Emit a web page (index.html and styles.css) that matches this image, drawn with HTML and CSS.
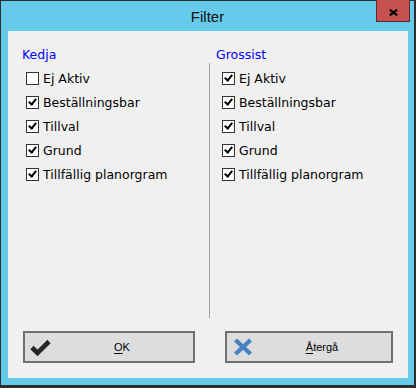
FILE: index.html
```html
<!DOCTYPE html>
<html lang="sv">
<head>
<meta charset="utf-8">
<title>Filter</title>
<link rel="stylesheet" href="styles.css">
</head>
<body>
<div class="window">
  <div class="titlebar">
    <span class="spacer"></span>
    <span class="title">Filter</span>
    <button class="close" aria-label="Stäng">
      <svg width="9" height="7" viewBox="0 0 9 7"><path d="M0.8 0.6 L8.2 6.4 M8.2 0.6 L0.8 6.4" stroke="#000" stroke-width="2.1" fill="none"/></svg>
    </button>
  </div>
  <div class="client">
    <div class="groups">
      <section class="group group-left">
        <div class="group-label">Kedja</div>
        <ul class="opts">
          <li><span class="cb"></span>Ej Aktiv</li>
          <li><span class="cb checked"></span>Beställningsbar</li>
          <li><span class="cb checked"></span>Tillval</li>
          <li><span class="cb checked"></span>Grund</li>
          <li><span class="cb checked"></span>Tillfällig planorgram</li>
        </ul>
      </section>
      <section class="group group-right">
        <div class="group-label">Grossist</div>
        <ul class="opts">
          <li><span class="cb checked"></span>Ej Aktiv</li>
          <li><span class="cb checked"></span>Beställningsbar</li>
          <li><span class="cb checked"></span>Tillval</li>
          <li><span class="cb checked"></span>Grund</li>
          <li><span class="cb checked"></span>Tillfällig planorgram</li>
        </ul>
      </section>
    </div>
    <div class="actions">
      <button class="btn btn-ok">
        <svg class="icon icon-ok" width="21" height="17" viewBox="0 0 21 17"><path d="M2 8.5 L7.5 14 L19 2.5" stroke="#262626" stroke-width="4.6" fill="none" stroke-linejoin="miter"/></svg>
        <span class="btn-label"><u>O</u>K</span>
      </button>
      <button class="btn btn-cancel">
        <svg class="icon icon-cancel" width="20" height="18" viewBox="0 0 20 18"><path d="M2.5 2 L17.5 16 M17.5 2 L2.5 16" stroke="#4a80bf" stroke-width="4.4" fill="none"/></svg>
        <span class="btn-label"><u>Å</u>tergå</span>
      </button>
    </div>
  </div>
</div>
</body>
</html>
```
FILE: styles.css
```css
html, body {
  margin: 0;
  padding: 0;
}

body {
  background: #ffffff;
}

.window {
  width: 416px;
  height: 388px;
  box-sizing: border-box;
  border-style: solid;
  border-color: #2e2e2e;
  border-width: 1px 2px 3px 1px;
  background: #66cbea;
  display: flex;
  flex-direction: column;
}

.titlebar {
  height: 30px;
  display: grid;
  grid-template-columns: 1fr auto 1fr;
}

.title {
  font-family: "Liberation Sans", Arial, sans-serif;
  font-size: 15px;
  line-height: 28px;
  padding-top: 2px;
  color: #111;
}

.close {
  justify-self: end;
  align-self: start;
  width: 34px;
  height: 22px;
  margin: -1px 4px 0 0;
  padding: 2px 0 0 0;
  box-sizing: border-box;
  border: 1px solid #5e2a2a;
  border-top-color: #c75050;
  background: #c75050;
  display: flex;
  align-items: center;
  justify-content: center;
}

.client {
  flex: 1;
  margin: 0 6px 7px 7px;
  background: #f0f0f0;
  padding-top: 16px;
  display: flex;
  flex-direction: column;
  font-family: "DejaVu Sans", Verdana, sans-serif;
  font-size: 12.5px;
  color: #000;
}

.groups {
  display: grid;
  grid-template-columns: 201px 1fr;
}

.group-label {
  line-height: 15px;
  color: #0000ff;
}

.group-left .group-label {
  padding-left: 14px;
}

.group-right .group-label {
  padding-left: 7px;
}

.opts {
  list-style: none;
  margin: 1px 0 0 0;
  height: 255px;
  box-sizing: border-box;
  padding-top: 3px;
}

.group-left .opts {
  padding-left: 18px;
}

.group-right .opts {
  padding-left: 12px;
  border-left: 1px solid #a0a0a0;
}

.opts li {
  height: 24px;
  display: flex;
  align-items: center;
  gap: 4px;
  line-height: 15px;
}

.cb {
  width: 13px;
  height: 13px;
  box-sizing: border-box;
  border: 1px solid #333333;
  background: #ffffff;
  flex: none;
  position: relative;
}

.cb.checked::after {
  content: "";
  position: absolute;
  left: 3px;
  top: 0px;
  width: 3px;
  height: 6px;
  border-right: 2.5px solid #000;
  border-bottom: 2.5px solid #000;
  transform: rotate(40deg);
  transform-origin: center;
}

.actions {
  margin-top: 13px;
  padding: 0 15px;
  display: flex;
  gap: 30px;
}

.btn {
  height: 32px;
  box-sizing: border-box;
  border: 2px solid #707070;
  background: #dddddd;
  display: flex;
  align-items: center;
  padding: 0;
  margin: 0;
  font-family: "Liberation Sans", Arial, sans-serif;
  font-size: 11px;
  color: #000;
}

.btn-ok {
  width: 172px;
}

.btn-cancel {
  flex: 1;
}

.icon {
  flex: none;
  display: block;
}

.icon-ok {
  margin-left: 5px;
}

.icon-cancel {
  margin-left: 6px;
}

.btn-label {
  flex: 1;
  text-align: center;
}

.btn-label u {
  text-decoration: underline;
  text-underline-offset: 2px;
}
```
